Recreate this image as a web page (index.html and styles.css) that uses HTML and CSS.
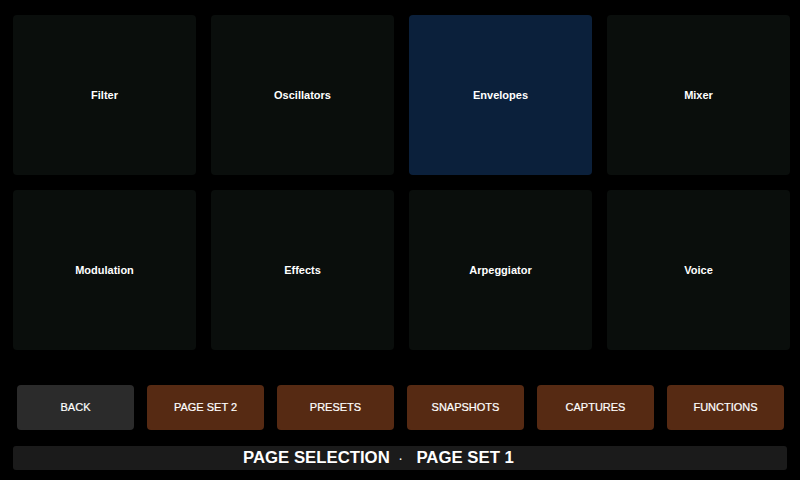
FILE: index.html
```html
<!DOCTYPE html>
<html>
<head>
<meta charset="utf-8">
<link rel="stylesheet" href="styles.css">
</head>
<body>
<div class="screen">
  <div class="tiles">
    <div class="tile">Filter</div>
    <div class="tile">Oscillators</div>
    <div class="tile tile-active">Envelopes</div>
    <div class="tile">Mixer</div>
    <div class="tile">Modulation</div>
    <div class="tile">Effects</div>
    <div class="tile">Arpeggiator</div>
    <div class="tile">Voice</div>
  </div>
  <div class="buttons">
    <div class="btn btn-back">BACK</div>
    <div class="btn">PAGE SET 2</div>
    <div class="btn">PRESETS</div>
    <div class="btn">SNAPSHOTS</div>
    <div class="btn">CAPTURES</div>
    <div class="btn">FUNCTIONS</div>
  </div>
  <div class="status">
    <span class="status-main">PAGE SELECTION</span>
    <span class="status-sep">·</span>
    <span class="status-main">PAGE SET 1</span>
  </div>
</div>
</body>
</html>
```

FILE: styles.css
```css
html, body {
  margin: 0;
  padding: 0;
  background: #000;
}
body {
  width: 800px;
  height: 480px;
  overflow: hidden;
  font-family: "Liberation Sans", Arial, sans-serif;
  color: #fff;
}
.screen {
  display: flex;
  flex-direction: column;
  width: 800px;
  height: 480px;
}
.tiles {
  display: grid;
  grid-template-columns: repeat(4, 183px);
  grid-template-rows: repeat(2, 160px);
  gap: 15px;
  padding: 15px 10px 0 13px;
}
.tile {
  background: #0a0e0c;
  border-radius: 4px;
  display: flex;
  align-items: center;
  justify-content: center;
  font-size: 11px;
  font-weight: bold;
}
.tile-active {
  background: #0b203b;
}
.buttons {
  display: flex;
  gap: 13px;
  padding-left: 17px;
  margin-top: 35px;
}
.btn {
  width: 117px;
  height: 45px;
  padding-bottom: 1px;
  box-sizing: border-box;
  border-radius: 4px;
  background: #562a13;
  display: flex;
  align-items: center;
  justify-content: center;
  font-size: 11px;
  font-weight: normal;
  -webkit-text-stroke: 0.2px #fff;
}
.btn-back {
  background: #2b2b2b;
}
.status {
  margin: 16px 13px 0 13px;
  height: 24px;
  background: #1b1b1b;
  border-radius: 3px;
  display: flex;
  align-items: center;
  padding-left: 230px;
  font-size: 16.75px;
  font-weight: bold;
}
.status-sep {
  font-size: 14px;
  font-weight: normal;
  margin: 0 13.5px 0 8.5px;
}
```
